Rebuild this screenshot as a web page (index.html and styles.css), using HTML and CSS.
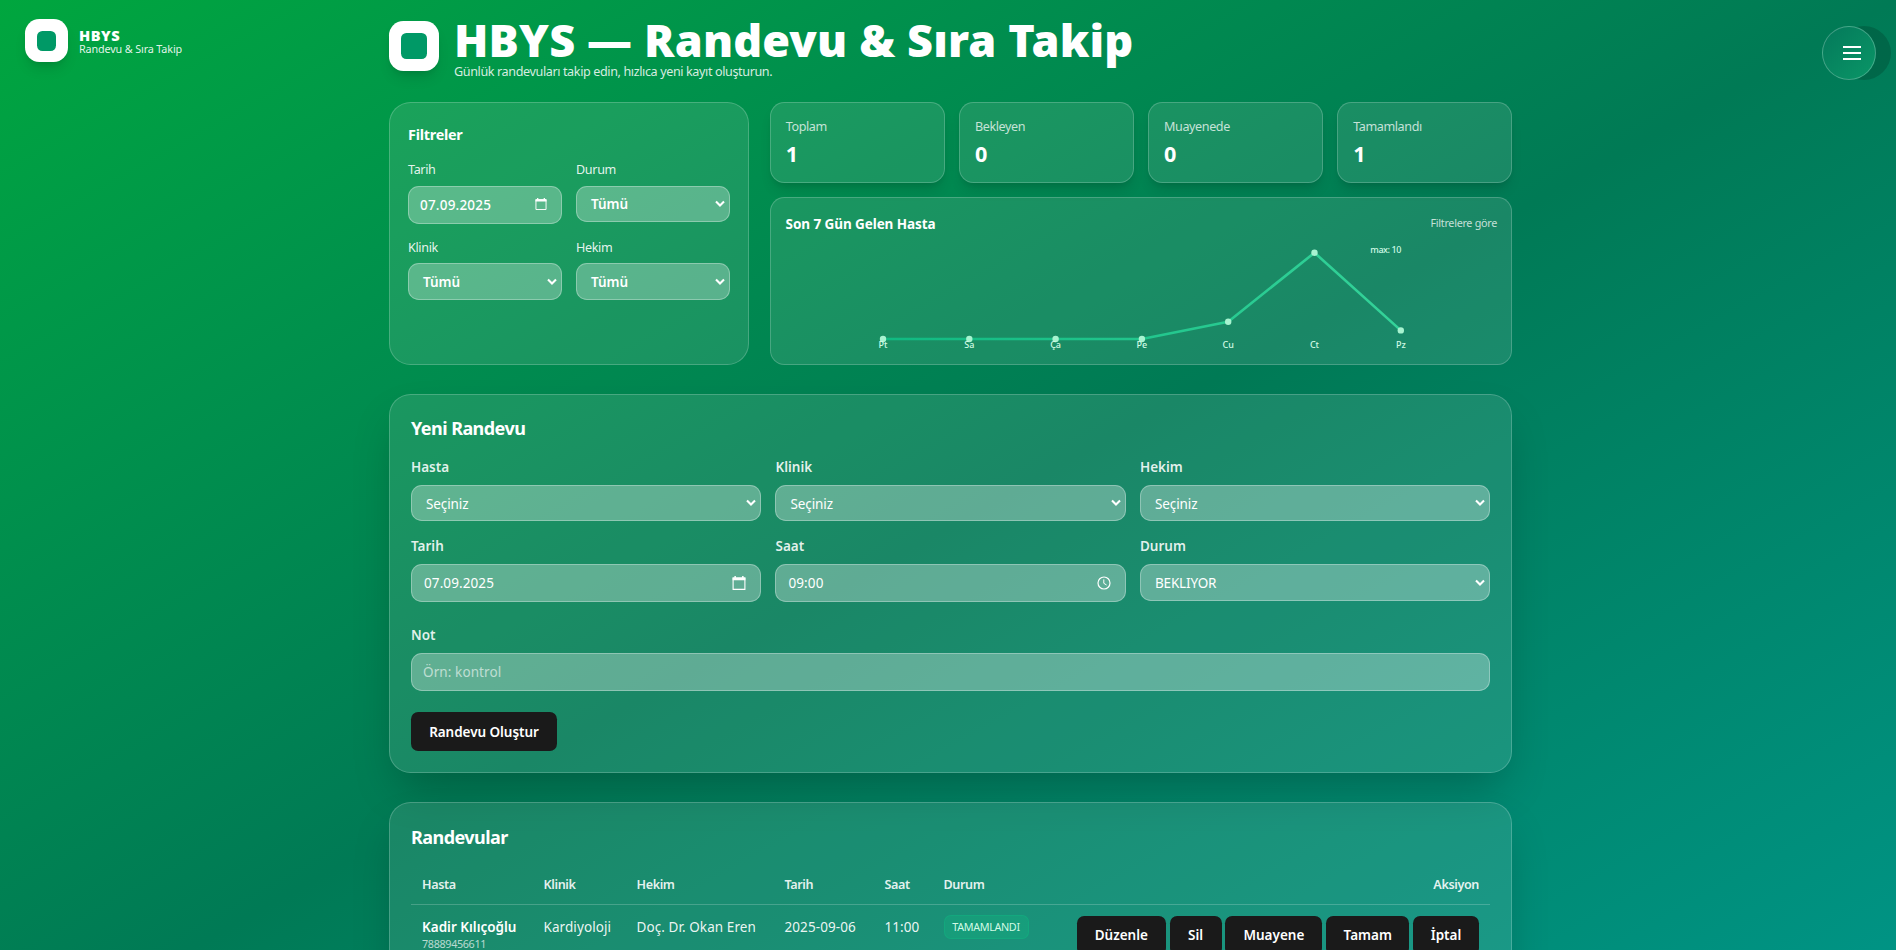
FILE: index.html
```html
<!DOCTYPE html>
<html lang="tr">
<head>
<meta charset="utf-8">
<title>HBYS — Randevu &amp; Sıra Takip</title>
<link rel="stylesheet" href="styles.css">
</head>
<body>
<svg class="defs" width="0" height="0">
  <symbol id="chev" viewBox="0 0 10 8"><path d="M1 1.6 5 5.6 9 1.6" fill="none" stroke="#fff" stroke-width="2.1"/></symbol>
  <symbol id="cal" viewBox="0 0 14 14"><path d="M1.1 2h11.8v11.4H1.1z" fill="none" stroke="#fff" stroke-width="1.1"/><path d="M.6 1.4h12.8v2.8H.6zM2.4 0h1.5v1.6H2.4zM10.1 0h1.5v1.6h-1.5z" fill="#fff"/></symbol>
  <symbol id="clock" viewBox="0 0 14 14"><circle cx="7" cy="7" r="6" fill="none" stroke="#fff" stroke-width="1.2"/><path d="M6.8 3.4v3.9l2.8 1.7" fill="none" stroke="#fff" stroke-width="1"/></symbol>
</svg>
<div class="brand">
  <div class="logo logo-sm"><i></i></div>
  <div><div class="brand-name">HBYS</div><div class="brand-sub">Randevu &amp; Sıra Takip</div></div>
</div>
<button class="menu" aria-label="Menü"><span></span><span></span><span></span></button>
<main class="page">
  <header class="head">
    <div class="logo"><i></i></div>
    <div><h1>HBYS — Randevu &amp; Sıra Takip</h1><p class="lead">Günlük randevuları takip edin, hızlıca yeni kayıt oluşturun.</p></div>
  </header>
  <div class="top">
    <section class="card filters">
      <h3>Filtreler</h3>
      <div class="fgrid">
        <div><label>Tarih</label><div class="ctl date semi">07.09.2025<svg class="ic small"><use href="#cal"/></svg></div></div>
        <div><label>Durum</label><div class="ctl sel semi">Tümü<svg class="ch"><use href="#chev"/></svg></div></div>
        <div><label class="drop">Klinik</label><div class="ctl sel semi low">Tümü<svg class="ch"><use href="#chev"/></svg></div></div>
        <div><label class="drop">Hekim</label><div class="ctl sel semi low">Tümü<svg class="ch"><use href="#chev"/></svg></div></div>
      </div>
    </section>
    <div class="right">
      <div class="stats">
        <div class="card stat"><span>Toplam</span><b>1</b></div>
        <div class="card stat"><span>Bekleyen</span><b>0</b></div>
        <div class="card stat"><span>Muayenede</span><b>0</b></div>
        <div class="card stat"><span>Tamamlandı</span><b>1</b></div>
      </div>
      <section class="card chart">
        <div class="chart-head"><h4>Son 7 Gün Gelen Hasta</h4><span>Filtrelere göre</span></div>
        <svg class="plot" viewBox="0 0 713 112">
          <defs><linearGradient id="ln" x1="0" x2="1"><stop offset="0" stop-color="#10b981"/><stop offset="1" stop-color="#34d399"/></linearGradient></defs>
          <polyline points="97,99 183.3,99 269.6,99 355.9,99 442.2,81.7 528.5,12.7 614.8,90.4" fill="none" stroke="url(#ln)" stroke-width="2.6" stroke-linejoin="round" stroke-linecap="round"/>
          <g fill="#a7f3d0"><circle cx="97" cy="99" r="3.2"/><circle cx="183.3" cy="99" r="3.2"/><circle cx="269.6" cy="99" r="3.2"/><circle cx="355.9" cy="99" r="3.2"/><circle cx="442.2" cy="81.7" r="3.2"/><circle cx="528.5" cy="12.7" r="3.2"/><circle cx="614.8" cy="90.4" r="3.2"/></g>
          <g class="ticks" text-anchor="middle"><text x="97" y="108">Pt</text><text x="183.3" y="108">Sa</text><text x="269.6" y="108">Ça</text><text x="355.9" y="108">Pe</text><text x="442.2" y="108">Cu</text><text x="528.5" y="108">Ct</text><text x="614.8" y="108">Pz</text></g>
          <text class="max" x="615.3" y="13" text-anchor="end" textLength="31">max: 10</text>
        </svg>
      </section>
    </div>
  </div>
  <section class="card form">
    <h2>Yeni Randevu</h2>
    <div class="grid3">
      <div><label>Hasta</label><div class="ctl sel pick">Seçiniz<svg class="ch"><use href="#chev"/></svg></div></div>
      <div><label>Klinik</label><div class="ctl sel pick">Seçiniz<svg class="ch"><use href="#chev"/></svg></div></div>
      <div><label>Hekim</label><div class="ctl sel pick">Seçiniz<svg class="ch"><use href="#chev"/></svg></div></div>
      <div><label>Tarih</label><div class="ctl date">07.09.2025<svg class="ic"><use href="#cal"/></svg></div></div>
      <div><label>Saat</label><div class="ctl date">09:00<svg class="ic"><use href="#clock"/></svg></div></div>
      <div><label>Durum</label><div class="ctl sel low caps">BEKLIYOR<svg class="ch"><use href="#chev"/></svg></div></div>
    </div>
    <div class="note"><label>Not</label><div class="ctl date ph">Örn: kontrol</div></div>
    <button class="btn main-btn">Randevu Oluştur</button>
  </section>
  <section class="card list">
    <h2>Randevular</h2>
    <div class="row th"><span>Hasta</span><span>Klinik</span><span>Hekim</span><span>Tarih</span><span>Saat</span><span>Durum</span><span class="end">Aksiyon</span></div>
    <div class="row td">
      <div><b>Kadir Kılıçoğlu</b><small>78889456611</small></div>
      <span>Kardiyoloji</span><span>Doç. Dr. Okan Eren</span><span class="num">2025-09-06</span><span class="num">11:00</span>
      <div><em class="badge">TAMAMLANDI</em></div>
      <div class="acts"><button class="btn b1">Düzenle</button><button class="btn b2">Sil</button><button class="btn b3">Muayene</button><button class="btn b4">Tamam</button><button class="btn b5">İptal</button></div>
    </div>
  </section>
</main>
</body>
</html>
```
FILE: styles.css
```css
* { box-sizing: border-box; }
html { height: 100%; overflow: hidden; }
body {
  margin: 0; height: 950px; overflow: hidden; position: relative; color: #fff;
  font: 12.6px/18px "Noto Sans", "Open Sans", sans-serif;
  background: linear-gradient(to bottom right in oklab, #00a63e, #007a55, #009689) 0 0 / 1896px 1055px no-repeat;
}
h1, h2, h3, h4, p { margin: 0; }
.defs { position: absolute; }
.brand { position: absolute; left: 25px; top: 19px; display: flex; gap: 11px; align-items: center; }
.brand-name { font-size: 14.6px; font-weight: 900; line-height: 14px; padding-top: 2px; letter-spacing: .5px; }
.brand-sub { font-size: 10.8px; line-height: 13px; color: rgba(255,255,255,.9); letter-spacing: -.14px; }
.logo {
  width: 50px; height: 50px; flex: none; border-radius: 14.4px; background: #fff;
  display: grid; place-items: center; box-shadow: 0 9px 14px -3px rgba(0,0,0,.12), 0 4px 6px -4px rgba(0,0,0,.12);
}
.logo i { width: 26px; height: 26px; border-radius: 5.4px; background: #096; }
.logo-sm { width: 43px; height: 43px; }
.logo-sm i { width: 19px; height: 20px; }
.menu {
  position: absolute; left: 1822px; top: 26px; width: 54px; height: 54px; border-radius: 50%;
  border: 1px solid rgba(255,255,255,.25); padding: 0 0 0 5px; background: linear-gradient(135deg, #04795a, #0a9667);
  box-shadow: 15px 0 0 rgba(0,0,0,.16); display: flex; flex-direction: column; align-items: center; justify-content: center; gap: 4px;
}
.menu span { width: 18px; height: 2px; background: #fff; }
.page { width: 1123px; margin-left: 389px; padding-top: 21px; }
.head { display: flex; gap: 15px; height: 81px; }
h1 { font-size: 45px; line-height: 46px; margin-top: -4px; font-weight: 900; white-space: nowrap; letter-spacing: .15px; }
.lead { line-height: 18px; color: rgba(255,255,255,.85); letter-spacing: -.39px; }
.card {
  background: rgba(255,255,255,.1); border: 1px solid rgba(255,255,255,.2); border-radius: 21.6px;
}
.top { display: grid; grid-template-columns: 360px 742.2px; gap: 20.8px; height: 263px; }
.filters { padding: 22px 18px; }
.filters h3 { font-size: 14.4px; line-height: 20px; font-weight: 700; letter-spacing: -.25px; }
.fgrid { display: grid; grid-template-columns: 154px 154px; column-gap: 14px; grid-auto-rows: 77px; margin-top: 14px; }
label { display: block; line-height: 18px; color: rgba(255,255,255,.9); }
.fgrid label { margin-bottom: 7px; padding-top: 2px; height: 20px; line-height: 17px; letter-spacing: -.35px; }
.fgrid .drop { padding-top: 3px; }
.ctl {
  height: 38px; border: 1px solid rgba(255,255,255,.3); border-radius: 10.8px; background: rgba(255,255,255,.3);
  display: flex; align-items: center; justify-content: space-between; padding: 0 14px 0 12px; font-size: 13.5px;
}
.fgrid .ctl { background: rgba(255,255,255,.28); }
.ctl.sel { height: 36px; padding: 0 4px 0 14px; }
.ctl.pick { padding-top: 2px; letter-spacing: -.1px; }
.pick .ch { margin-top: -2px; }
.caps { letter-spacing: -.15px; }
.ctl.sel.low { height: 37px; }
.date { letter-spacing: .1px; }
.date.semi { font-weight: 500; padding-left: 11px; letter-spacing: .2px; }
.sel.semi { font-weight: 600; }
.ch { width: 10px; height: 8px; }
.ic { width: 14px; height: 14px; }
.ic.small { width: 12px; height: 12px; margin-top: -3px; }
.right { display: flex; flex-direction: column; gap: 14px; }
.stats { display: grid; grid-template-columns: repeat(4, 1fr); gap: 14.4px; }
.stat { height: 81px; padding: 15px; border-radius: 14.4px; box-shadow: 0 9px 13px -3px rgba(0,0,0,.12), 0 4px 6px -4px rgba(0,0,0,.12); }
.stat span { display: block; color: rgba(255,255,255,.75); letter-spacing: -.42px; }
.stat b { display: block; font-size: 21.6px; line-height: 28px; margin-top: 4px; font-weight: 700; }
.chart { height: 168px; padding: 17px 14px 0 14.8px; border-radius: 14.4px; }
.chart-head { display: flex; justify-content: space-between; height: 25px; }
.chart h4 { font-size: 13.5px; font-weight: 700; letter-spacing: -.08px; }
.chart-head span { font-size: 10.8px; line-height: 16px; color: rgba(255,255,255,.75); letter-spacing: -.3px; }
.plot { display: block; width: 713px; height: 112px; }
.ticks, .max { font-size: 9px; font-weight: 500; fill: #d1fae5; }
.form, .list { padding: 21px 21px; box-shadow: 0 22px 45px -11px rgba(0,0,0,.25); }
.form { margin-top: 29px; height: 379px; }
h2 { font-size: 18px; line-height: 25px; font-weight: 700; letter-spacing: -.55px; }
.grid3 { display: grid; grid-template-columns: repeat(3, 1fr); column-gap: 14.4px; grid-auto-rows: 79px; margin-top: 17px; }
.form label { font-size: 13.5px; font-weight: 600; height: 27px; line-height: 19px; color: rgba(255,255,255,.88); }
.note { margin-top: 10px; }
.ctl.ph { color: rgba(255,255,255,.6); padding-left: 11px; }
.btn { height: 39px; background: #1a1a1a; color: #fff; border: 0; border-radius: 7.2px; font: 600 13.5px "Noto Sans", sans-serif; padding: 0; }
.main-btn { width: 146px; margin-top: 21px; display: block; letter-spacing: -.05px; }
.list { padding-top: 22px; margin-top: 29px; height: 240px; }
.row { display: grid; grid-template-columns: 121.5px 93px 148px 100px 59px 133px 1fr; padding: 0 11px; }
.th { font-weight: 600; font-size: 12.6px; margin-top: 24px; height: 31px; padding-top: 2px; border-bottom: 1px solid rgba(255,255,255,.2); color: rgba(255,255,255,.9); letter-spacing: -.38px; }
.end { text-align: right; }
.td { font-size: 13.5px; padding-top: 11px; white-space: nowrap; line-height: 22px; }
.td b { display: block; font-weight: 600; }
.td small { display: block; font-size: 10.8px; line-height: 12px; color: rgba(255,255,255,.7); letter-spacing: -.35px; }
.td > span { color: rgba(255,255,255,.93); letter-spacing: .08px; }
.badge { display: grid; place-items: center; width: 85px; height: 24px; margin-top: -1px; border: 1px solid rgba(16,185,129,.4); background: rgba(16,185,129,.3); border-radius: 7px; font-style: normal; font-size: 10.8px; color: #d1fae5; letter-spacing: -.35px; }
.acts { display: flex; justify-content: flex-end; gap: 3.8px; }
.acts .btn { padding-bottom: 1px; }
.b1 { width: 89px; } .b2 { width: 52px; } .b3 { width: 97px; } .b4 { width: 83px; } .b5 { width: 66px; }
```
